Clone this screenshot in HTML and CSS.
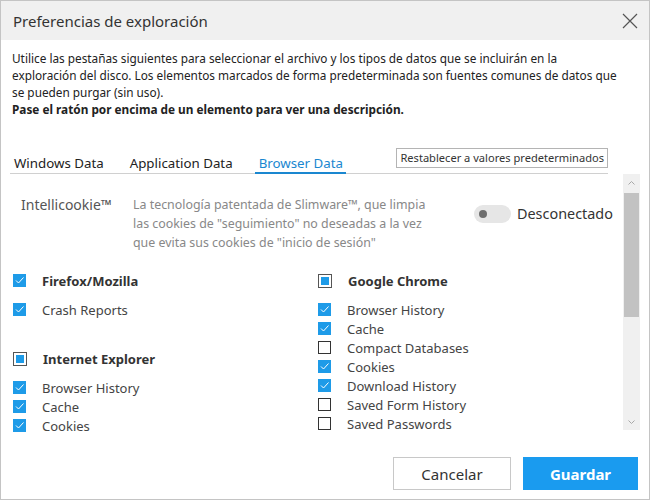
FILE: index.html
```html
<!DOCTYPE html>
<html>
<head>
<meta charset="utf-8">
<title>Preferencias de exploración</title>
<link rel="stylesheet" href="styles.css">
</head>
<body>
<div class="dialog">
  <div class="titlebar">
    <span class="title">Preferencias de exploración</span>
    <svg class="close" width="16" height="16" viewBox="0 0 16 16"><path d="M1 1 L15 15 M15 1 L1 15" stroke="#555" stroke-width="1.2" fill="none"/></svg>
  </div>

  <div class="intro">
    <p>Utilice las pestañas siguientes para seleccionar el archivo y los tipos de datos que se incluirán en la<br>exploración del disco. Los elementos marcados de forma predeterminada son fuentes comunes de datos que se pueden purgar (sin uso).</p>
    <p class="hint">Pase el ratón por encima de un elemento para ver una descripción.</p>
  </div>

  <div class="tabbar">
    <span class="tab">Windows Data</span>
    <span class="tab">Application Data</span>
    <span class="tab active">Browser Data</span>
    <span class="reset">Restablecer a valores predeterminados</span>
  </div>

  <div class="panel">
    <div class="content">
      <div class="intelli">
        <span class="intelli-name">Intellicookie™</span>
        <span class="intelli-desc">La tecnología patentada de Slimware™, que limpia las cookies de "seguimiento" no deseadas a la vez que evita sus cookies de "inicio de sesión"</span>
        <span class="toggle"><span class="knob"></span></span>
        <span class="toggle-label">Desconectado</span>
      </div>

      <div class="columns">
        <div class="col">
          <div class="group">
            <div class="item head"><span class="cb on"></span>Firefox/Mozilla</div>
            <div class="item"><span class="cb on"></span>Crash Reports</div>
          </div>
          <div class="group">
            <div class="item head"><span class="cb part"></span>Internet Explorer</div>
            <div class="item"><span class="cb on"></span>Browser History</div>
            <div class="item"><span class="cb on"></span>Cache</div>
            <div class="item"><span class="cb on"></span>Cookies</div>
          </div>
        </div>
        <div class="col">
          <div class="group">
            <div class="item head"><span class="cb part"></span>Google Chrome</div>
            <div class="item"><span class="cb on"></span>Browser History</div>
            <div class="item"><span class="cb on"></span>Cache</div>
            <div class="item"><span class="cb"></span>Compact Databases</div>
            <div class="item"><span class="cb on"></span>Cookies</div>
            <div class="item"><span class="cb on"></span>Download History</div>
            <div class="item"><span class="cb"></span>Saved Form History</div>
            <div class="item"><span class="cb"></span>Saved Passwords</div>
          </div>
        </div>
      </div>
    </div>
    <div class="scrollbar">
      <svg class="arrow" width="17" height="18" viewBox="0 0 17 18"><path d="M5.5 10.5 L8.5 7.5 L11.5 10.5" stroke="#a8a8a8" fill="none"/></svg>
      <div class="thumb"></div>
      <div class="track"></div>
      <svg class="arrow" width="17" height="16" viewBox="0 0 17 16"><path d="M5.5 6.5 L8.5 9.5 L11.5 6.5" stroke="#a8a8a8" fill="none"/></svg>
    </div>
  </div>

  <div class="footer">
    <button class="btn">Cancelar</button>
    <button class="btn primary">Guardar</button>
  </div>
</div>
</body>
</html>
```

FILE: styles.css
```css
html, body {
	margin: 0;
	padding: 0;
	background-color: #fff;
}

body {
	font-family: "Noto Sans", "Open Sans", Arial, sans-serif;
	color: #222;
}

.dialog {
	width: 650px;
	height: 500px;
	box-sizing: border-box;
	border: 1px solid #c4c4c4;
	display: flex;
	flex-direction: column;
}

.titlebar {
	height: 39px;
	flex-shrink: 0;
	background-color: #f0f0f0;
	display: flex;
	align-items: center;
	justify-content: space-between;
	padding: 0 11px 0 12px;
}

.title {
	font-size: 15px;
	color: #333;
}

.intro {
	padding: 10px 22px 0 11px;
	font-size: 11.8px;
	line-height: 17px;
}

.intro p {
	margin: 0;
}

.hint {
	font-weight: bold;
}

.tabbar {
	margin: 30px 41px 0 9px;
	border-bottom: 1px solid #d0d0d0;
	display: flex;
	align-items: flex-end;
	height: 25px;
	flex-shrink: 0;
	font-size: 13.3px;
	line-height: 18px;
}

.tab {
	padding: 0 3px 1px 4px;
	margin-right: 19px;
	color: #222;
}

.tab.active {
	color: #1a87d0;
	border-bottom: 2px solid #1a87d0;
	padding-bottom: 0;
	margin-bottom: -1px;
}

.reset {
	margin-left: auto;
	align-self: flex-start;
	border: 1px solid #b4b4b4;
	font-size: 11.1px;
	padding: 1px 3px;
	line-height: 16px;
	color: #333;
}

.panel {
	margin: 0 10px 0 10px;
	height: 256px;
	flex-shrink: 0;
	display: flex;
}

.content {
	flex: 1;
}

.intelli {
	display: flex;
	align-items: flex-start;
	padding: 21px 0 0 10px;
}

.intelli-name {
	width: 112px;
	font-size: 14px;
	color: #555;
	line-height: 19px;
}

.intelli-desc {
	width: 311px;
	font-size: 12.4px;
	color: #888;
	line-height: 19px;
}

.toggle {
	margin: 10px 0 0 30px;
	width: 37px;
	height: 18px;
	border-radius: 9px;
	background-color: #e6e6e6;
	position: relative;
}

.knob {
	position: absolute;
	left: 5px;
	top: 5px;
	width: 8px;
	height: 8px;
	border-radius: 50%;
	background-color: #6e6e6e;
}

.toggle-label {
	margin: 9px 0 0 6px;
	font-size: 14.4px;
	line-height: 20px;
	color: #333;
}

.columns {
	display: flex;
	padding: 19px 0 0 2px;
}

.col {
	width: 305px;
}

.group {
	margin-bottom: 30px;
}

.item {
	display: flex;
	align-items: center;
	height: 19px;
	font-size: 13px;
	color: #444;
}

.item.head {
	font-weight: bold;
	color: #333;
	margin-bottom: 10px;
}

.cb {
	width: 13px;
	height: 13px;
	box-sizing: border-box;
	border: 1px solid #333;
	margin-right: 16px;
	background-color: #fff;
}

.cb.on {
	border: none;
	background-color: #1e9be8;
	background-image: url("data:image/svg+xml,%3Csvg xmlns='http://www.w3.org/2000/svg' width='13' height='13'%3E%3Cpath d='M3 6.5 L5.5 9 L10.5 3.5' stroke='white' stroke-width='1' fill='none'/%3E%3C/svg%3E");
}

.cb.part {
	width: 14px;
	height: 14px;
	border: 1px solid #555;
	padding: 2px;
	background-color: #1e9be8;
	background-clip: content-box;
}

.scrollbar {
	width: 17px;
	background-color: #f0f0f0;
	display: flex;
	flex-direction: column;
}

.thumb {
	margin: 1px 1px 0 1px;
	height: 124px;
	background-color: #c2c2c2;
}

.track {
	flex: 1;
}

.footer {
	margin-top: auto;
	display: flex;
	justify-content: flex-end;
	gap: 12px;
	padding: 0 11px 9px 0;
}

.btn {
	width: 118px;
	height: 33px;
	font-family: inherit;
	font-size: 15px;
	background-color: #fff;
	border: 1px solid #c8c8c8;
	color: #333;
}

.btn.primary {
	width: 115px;
	background-color: #1a9bef;
	border-color: #1a9bef;
	color: #fff;
	font-weight: bold;
}
```
